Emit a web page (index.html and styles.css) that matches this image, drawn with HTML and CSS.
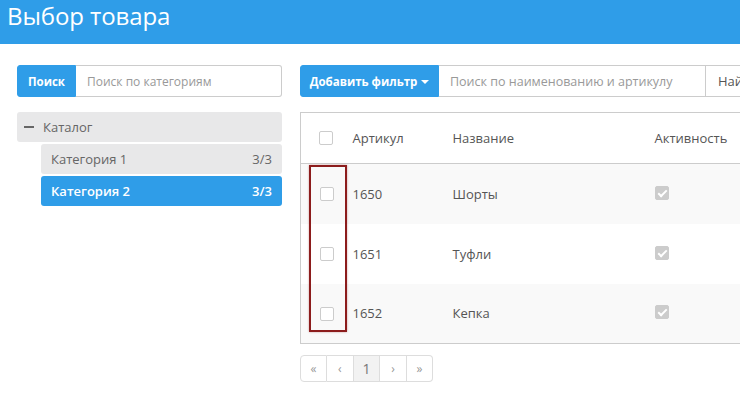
FILE: index.html
```html
<!DOCTYPE html>
<html lang="ru">
<head>
<meta charset="utf-8">
<title>Выбор товара</title>
<link rel="stylesheet" href="styles.css">
</head>
<body>
<header class="topbar"><h1 class="title">Выбор товара</h1></header>
<main class="content">
  <aside class="side">
    <div class="group">
      <button class="btn btn-primary btn-search">Поиск</button>
      <input class="field" type="text" placeholder="Поиск по категориям">
    </div>
    <ul class="tree">
      <li class="node node-root"><span class="minus"></span>Каталог</li>
      <li class="node node-child"><span>Категория 1</span><span>3/3</span></li>
      <li class="node node-child node-active"><span>Категория 2</span><span>3/3</span></li>
    </ul>
  </aside>
  <section class="main">
    <div class="group">
      <button class="btn btn-primary btn-filter">Добавить фильтр <span class="caret"></span></button>
      <input class="field field-wide" type="text" placeholder="Поиск по наименованию и артикулу">
      <button class="btn btn-default">Найти</button>
    </div>
    <div class="table-wrap">
      <table class="grid">
        <thead>
          <tr><th class="c-check"><span class="cb"></span></th><th class="c-art">Артикул</th><th class="c-name">Название</th><th>Активность</th></tr>
        </thead>
        <tbody>
          <tr><td class="c-check"><span class="cb"></span></td><td>1650</td><td>Шорты</td><td><span class="cb cb-on"></span></td></tr>
          <tr><td class="c-check"><span class="cb"></span></td><td>1651</td><td>Туфли</td><td><span class="cb cb-on"></span></td></tr>
          <tr><td class="c-check"><span class="cb"></span></td><td>1652</td><td>Кепка</td><td><span class="cb cb-on"></span></td></tr>
        </tbody>
      </table>
      <div class="highlight"></div>
    </div>
    <ul class="pager">
      <li>«</li><li>‹</li><li class="current">1</li><li>›</li><li>»</li>
    </ul>
  </section>
</main>
</body>
</html>
```
FILE: styles.css
```css
* { box-sizing: border-box; }
html, body { margin: 0; padding: 0; }
body {
  width: 740px;
  height: 394px;
  overflow: hidden;
  background: #fff;
  font-family: "Open Sans", "DejaVu Sans", sans-serif;
  font-size: 13px;
  color: #555;
}
.topbar {
  height: 44px;
  background: #2f9de8;
  padding: 0 7px;
}
.title {
  margin: 0;
  font-size: 24px;
  font-weight: 400;
  line-height: 32px;
  color: #fff;
  letter-spacing: -0.1px;
}
.content {
  display: flex;
  gap: 18px;
  padding: 21px 0 0 17px;
  width: 1000px;
}
.side { width: 265px; flex: none; }
.main { width: 620px; flex: none; }
.group { display: flex; height: 32px; }
.btn {
  font-family: inherit;
  font-size: 12px;
  font-weight: 700;
  border: 1px solid transparent;
  padding: 0;
  height: 32px;
  cursor: pointer;
  flex: none;
}
.btn-primary {
  background: #2f9de8;
  color: #fff;
  border-color: #2f9de8;
  border-radius: 3px 0 0 3px;
}
.btn-search { width: 59px; font-size: 11.5px; }
.btn-filter { width: 139px; font-size: 11.5px; }
.caret {
  display: inline-block;
  width: 0; height: 0;
  border-left: 4px solid transparent;
  border-right: 4px solid transparent;
  border-top: 4px solid #fff;
  vertical-align: middle;
  margin-left: 1px;
}
.btn-default {
  background: #fff;
  color: #555;
  font-weight: 400;
  font-size: 13px;
  border: 1px solid #ccc;
  border-left: none;
  padding: 0 12px;
}
.field {
  flex: 1;
  height: 32px;
  border: 1px solid #ccc;
  border-left: none;
  border-radius: 0 3px 3px 0;
  font-family: inherit;
  font-size: 12px;
  color: #555;
  padding: 0 11px;
  outline: none;
}
.field::placeholder { color: #999; }
.field-wide { flex: none; width: 267px; border-radius: 0; font-size: 12.5px; }
.tree { list-style: none; margin: 15px 0 0; padding: 0; }
.node {
  height: 30px;
  display: flex;
  align-items: center;
  background: #e8e8e9;
  border-radius: 3px;
  color: #666;
  margin-bottom: 2px;
}
.node-root { padding-left: 7px; }
.minus {
  display: inline-block;
  width: 10px;
  height: 2px;
  background: #666;
  margin-right: 9px;
}
.node-child {
  margin-left: 24px;
  justify-content: space-between;
  padding: 0 10px;
}
.node-active { background: #2f9de8; color: #fff; font-weight: 600; }
.table-wrap { position: relative; margin-top: 15px; }
.grid {
  width: 100%;
  border-collapse: collapse;
  border: 1px solid #ccc;
}
.grid th {
  font-weight: 400;
  text-align: left;
  height: 51px;
  border-bottom: 1px solid #ccc;
  color: #555;
  padding: 0;
}
.grid td { height: 60px; padding: 0; color: #555; }
.grid tbody tr:nth-child(odd) { background: #f9f9f9; }
.c-check { width: 52px; padding-left: 18px !important; }
.c-art { width: 100px; }
.c-name { width: 202px; }
.cb {
  display: block;
  width: 14px;
  height: 14px;
  border: 1px solid #ccc;
  border-radius: 2px;
  background: #fff;
  margin: 0;
}
.grid th.c-check .cb { margin-top: -1px; }
.grid td.c-check .cb { margin-left: 1px; margin-top: 1px; }
.cb-on {
  background: #ccc;
  position: relative;
}
.cb-on::after {
  content: "";
  position: absolute;
  left: 4px;
  top: 1px;
  width: 3px;
  height: 7px;
  border: solid #fff;
  border-width: 0 2px 2px 0;
  transform: rotate(45deg);
}
.grid td:last-child .cb { margin-top: -2px; }
.highlight {
  position: absolute;
  left: 9px;
  top: 53px;
  width: 38px;
  height: 167px;
  border: 2px solid #8c1c1c;
  box-shadow: 0 0 2px rgba(140, 28, 28, 0.4);
}
.pager {
  list-style: none;
  display: flex;
  margin: 11px 0 0;
  padding: 0;
}
.pager li {
  width: 26.6px;
  height: 27px;
  border: 1px solid #ddd;
  border-left: none;
  display: flex;
  align-items: center;
  justify-content: center;
  color: #999;
  font-size: 12px;
}
.pager li:first-child { border-left: 1px solid #ddd; border-radius: 4px 0 0 4px; width: 27px; }
.pager li:last-child { border-radius: 0 4px 4px 0; }
.pager li.current { background: #f2f2f2; color: #777; font-size: 14px; }
```
